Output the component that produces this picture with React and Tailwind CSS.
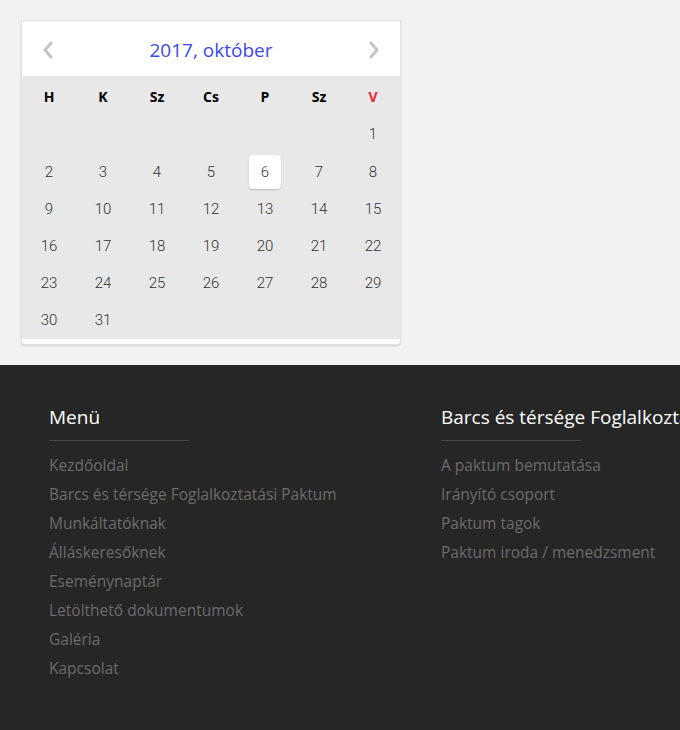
import React from 'react';

const DAYS = ['H', 'K', 'Sz', 'Cs', 'P', 'Sz', 'V'];

const MENU = [
  'Kezdőoldal',
  'Barcs és térsége Foglalkoztatási Paktum',
  'Munkáltatóknak',
  'Álláskeresőknek',
  'Eseménynaptár',
  'Letölthető dokumentumok',
  'Galéria',
  'Kapcsolat',
];

const PAKTUM = [
  'A paktum bemutatása',
  'Irányító csoport',
  'Paktum tagok',
  'Paktum iroda / menedzsment',
];

// October 2017 starts on Sunday
const cells = [...Array(6).fill(null), ...Array.from({ length: 31 }, (_, i) => i + 1)];

const Chevron = ({ dir }) => (
  <svg width="12" height="18" viewBox="0 0 12 18" fill="none">
    <path
      d={dir === 'left' ? 'M9 2 L3 9 L9 16' : 'M3 2 L9 9 L3 16'}
      stroke="#c4c4c4"
      strokeWidth="3"
      strokeLinecap="round"
      strokeLinejoin="round"
    />
  </svg>
);

const Calendar = () => (
  <div className="w-[380px] bg-white border border-[#e3e3e3] rounded-b shadow-[0_1px_2px_rgba(0,0,0,0.15)] pb-[5px]">
    {/* Month header */}
    <div className="h-[55px] flex items-center justify-between px-5 pt-[3px]">
      <button className="p-0"><Chevron dir="left" /></button>
      <span className="text-[19px] text-[#3d47f0] font-['Open_Sans',sans-serif]">2017, október</span>
      <button className="p-0"><Chevron dir="right" /></button>
    </div>

    <div className="bg-[#e8e8e8]">
      <div className="grid grid-cols-7 h-[40px] items-center">
        {DAYS.map((d, i) => (
          <div
            key={i}
            className={`text-center text-[14px] font-bold font-['Open_Sans',sans-serif] ${i === 6 ? 'text-[#e8262c]' : 'text-black'}`}
          >
            {d}
          </div>
        ))}
      </div>
      <div className="grid grid-cols-7 font-['Roboto',sans-serif] font-light text-[15px] text-[#333]">
        {cells.map((n, i) => (
          <div key={i} className="h-[37.2px] flex items-center justify-center">
            {n && (
              <span
                className={`w-[32px] h-[34px] flex items-center justify-center rounded ${n === 6 ? 'bg-white shadow-[0_1px_2px_rgba(0,0,0,0.2)]' : ''}`}
              >
                {n}
              </span>
            )}
          </div>
        ))}
      </div>
    </div>
  </div>
);

const FooterColumn = ({ title, items }) => (
  <div className="w-[392px] shrink-0">
    <h3 className="text-[19px] text-white whitespace-nowrap leading-none mb-[13px]">{title}</h3>
    <div className="w-[140px] h-px bg-[#464646] mb-[10px]" />
    <ul className="flex flex-col">
      {items.map(item => (
        <li key={item} className="h-[29px] text-[15.5px] text-[#6b6b6b] whitespace-nowrap leading-[29px]">
          {item}
        </li>
      ))}
    </ul>
  </div>
);

export default function App() {
  return (
    <div className="w-[680px] h-[730px] overflow-hidden bg-[#f2f2f2] flex flex-col">
      <div className="pt-5 pl-[21px] h-[365px]">
        <Calendar />
      </div>
      <footer className="flex-1 bg-[#262626] pt-[43px] pl-[49px] flex font-['Open_Sans',sans-serif]">
        <FooterColumn title="Menü" items={MENU} />
        <FooterColumn title="Barcs és térsége Foglalkoztatási Paktum" items={PAKTUM} />
      </footer>
    </div>
  );
}
